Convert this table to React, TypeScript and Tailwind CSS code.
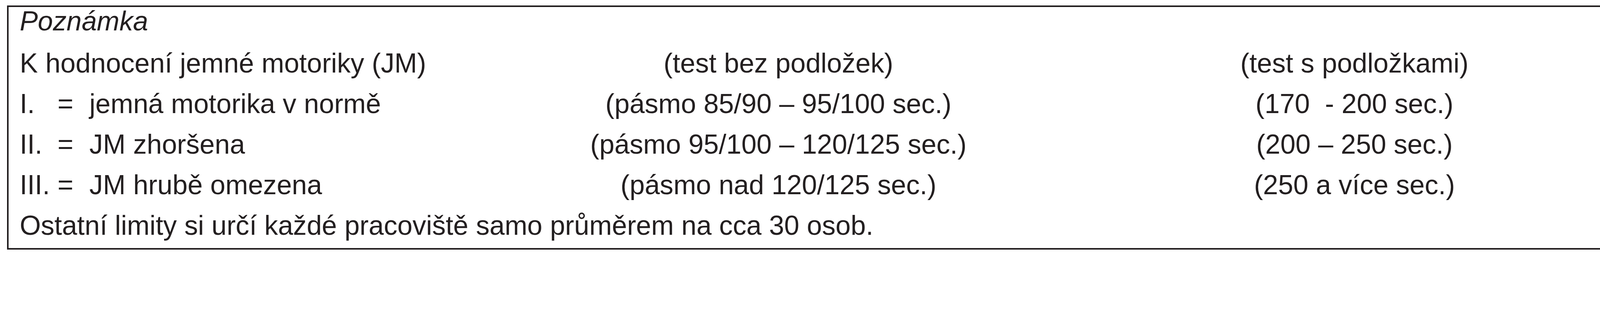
const grades = [
  {
    label: "I.",
    text: "jemná motorika v normě",
    withoutPads: "(pásmo 85/90 – 95/100 sec.)",
    withPads: "(170  - 200 sec.)",
  },
  {
    label: "II.",
    text: "JM zhoršena",
    withoutPads: "(pásmo 95/100 – 120/125 sec.)",
    withPads: "(200 – 250 sec.)",
  },
  {
    label: "III.",
    text: "JM hrubě omezena",
    withoutPads: "(pásmo nad 120/125 sec.)",
    withPads: "(250 a více sec.)",
  },
];

const Row = ({ left, mid, right }: { left: React.ReactNode; mid: string; right: string }) => (
  <div className="flex h-[104px] leading-[104px] whitespace-pre">
    <div className="w-[1100.8px] shrink-0">{left}</div>
    <div className="w-[1683.2px] shrink-0 text-center">{mid}</div>
    <div className="w-[1266px] shrink-0 text-center">{right}</div>
  </div>
);

export default function App() {
  return (
    <div className="w-[4106px] h-[640px] bg-white pt-[14.4px] pl-[18.4px] font-['Liberation_Sans',Arial,sans-serif] text-[69.6px] text-[#231f20]">
      <div className="w-[4088px] h-[625.6px] border-[4.8px] border-[#231f20] pl-[28px] overflow-hidden">
        <div className="h-[91.2px] leading-[73.6px] italic">Poznámka</div>

        <Row
          left="K hodnocení jemné motoriky (JM)"
          mid="(test bez podložek)"
          right="(test s podložkami)"
        />

        {grades.map((g) => (
          <Row
            key={g.label}
            left={
              <div className="flex">
                <span className="w-[96.8px]">{g.label}</span>
                <span className="w-[81.6px]">=</span>
                <span>{g.text}</span>
              </div>
            }
            mid={g.withoutPads}
            right={g.withPads}
          />
        ))}

        <div className="h-[104px] leading-[104px]">
          Ostatní limity si určí každé pracoviště samo průměrem na cca 30 osob.
        </div>
      </div>
    </div>
  );
}
